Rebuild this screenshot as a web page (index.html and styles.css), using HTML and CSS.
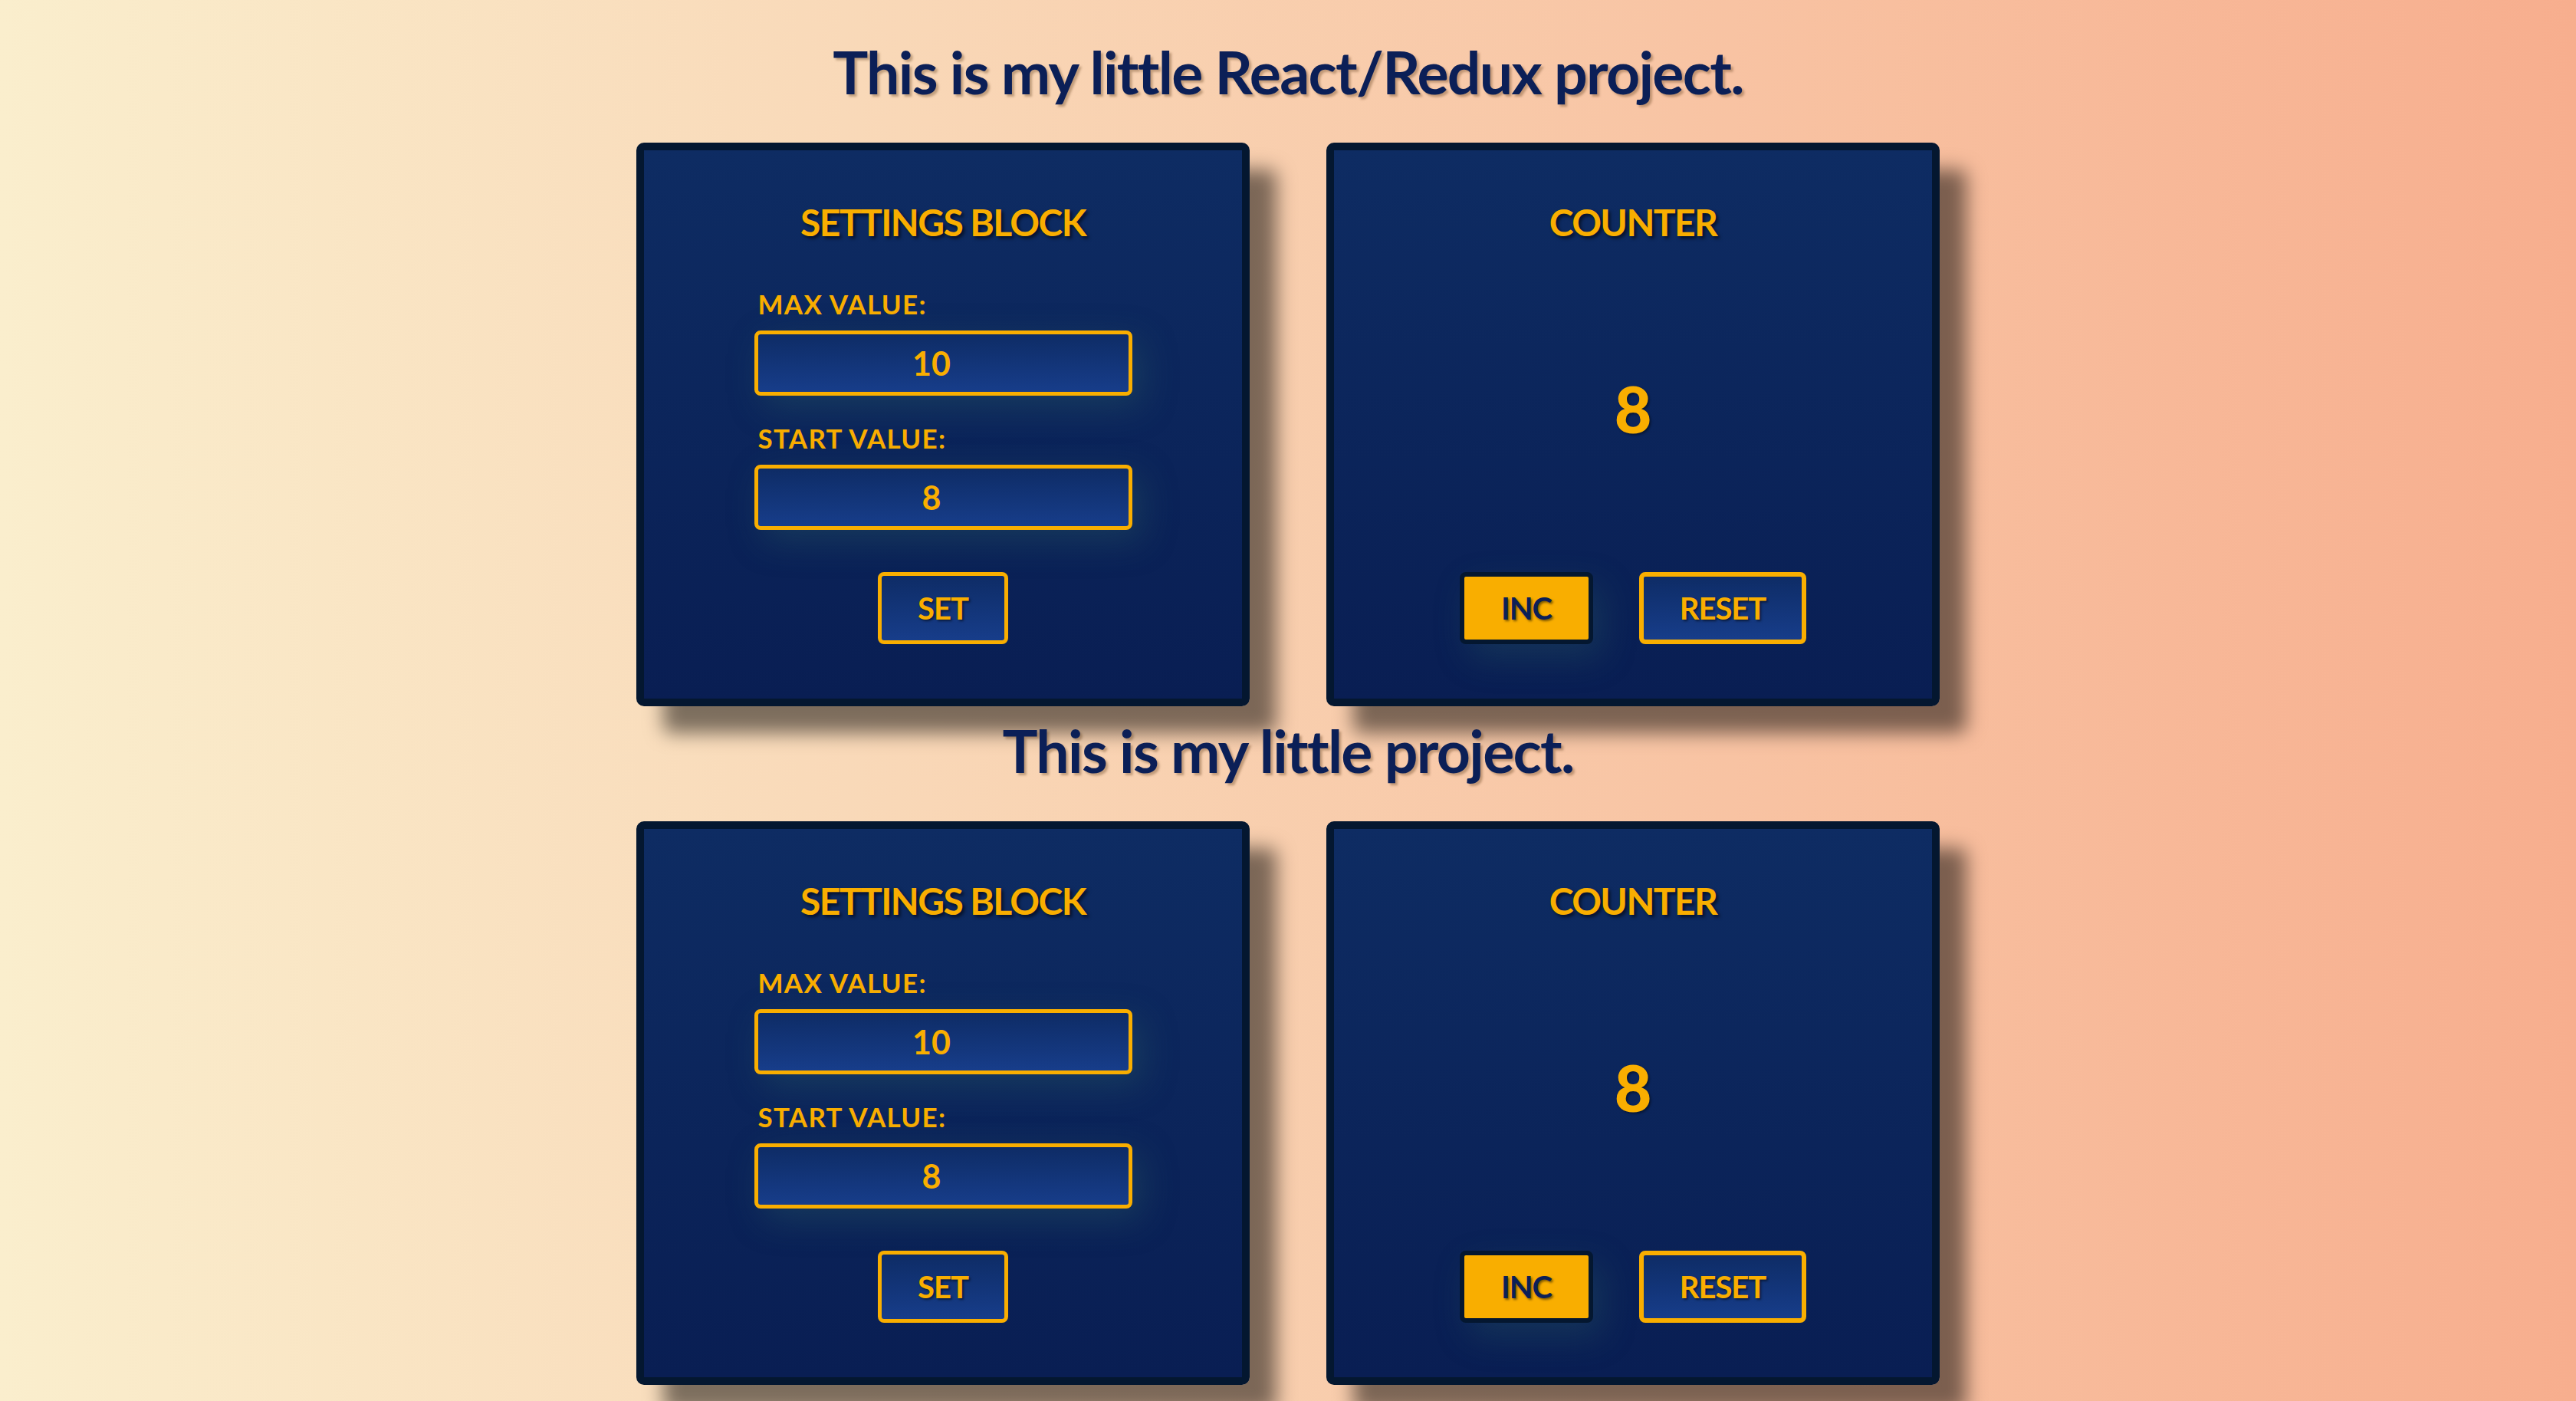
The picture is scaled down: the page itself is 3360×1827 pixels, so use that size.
FILE: index.html
```html
<!DOCTYPE html>
<html lang="en">
<head>
<meta charset="utf-8">
<title>Counter</title>
<link rel="stylesheet" href="styles.css">
</head>
<body>
<div class="page">
  <section class="app">
    <h1 class="app-title">This is my little React/Redux project.</h1>
    <div class="row">
      <div class="card">
        <h2 class="card-title">SETTINGS BLOCK</h2>
        <div class="fields">
          <label class="field"><span class="label">MAX VALUE:</span><input class="value-input" type="text" value="10"></label>
          <label class="field"><span class="label">START VALUE:</span><input class="value-input" type="text" value="8"></label>
        </div>
        <div class="actions"><button class="btn btn-set">SET</button></div>
      </div>
      <div class="card">
        <h2 class="card-title">COUNTER</h2>
        <div class="display">8</div>
        <div class="actions"><button class="btn btn-inc">INC</button><button class="btn btn-reset">RESET</button></div>
      </div>
    </div>
  </section>
  <section class="app">
    <h1 class="app-title">This is my little project.</h1>
    <div class="row">
      <div class="card">
        <h2 class="card-title">SETTINGS BLOCK</h2>
        <div class="fields">
          <label class="field"><span class="label">MAX VALUE:</span><input class="value-input" type="text" value="10"></label>
          <label class="field"><span class="label">START VALUE:</span><input class="value-input" type="text" value="8"></label>
        </div>
        <div class="actions"><button class="btn btn-set">SET</button></div>
      </div>
      <div class="card">
        <h2 class="card-title">COUNTER</h2>
        <div class="display">8</div>
        <div class="actions"><button class="btn btn-inc">INC</button><button class="btn btn-reset">RESET</button></div>
      </div>
    </div>
  </section>
</div>
</body>
</html>
```

FILE: styles.css
```css
html, body {
  margin: 0;
  padding: 0;
}
body {
  min-height: 100vh;
  background: linear-gradient(90deg, #faeecd 0%, #f7ae8e 100%);
  font-family: Lato, "Open Sans", "DejaVu Sans", sans-serif;
  overflow: hidden;
}
.page {
  padding-top: 47px;
}
.app + .app {
  margin-top: 11px;
}
.app-title {
  margin: 0 0 47px;
  text-align: center;
  font-size: 77px;
  line-height: 92px;
  font-weight: 700;
  color: #0b1f57;
  letter-spacing: -1.7px;
  text-shadow: 3px 3px 3px rgba(90, 55, 20, 0.35);
}
.row {
  display: flex;
  justify-content: center;
  gap: 100px;
}
.card {
  width: 800px;
  height: 735px;
  box-sizing: border-box;
  border: 10px solid #041730;
  border-radius: 10px;
  background: linear-gradient(180deg, #0e2c63 0%, #091e53 100%);
  box-shadow: 35px 35px 25px rgba(0, 0, 0, 0.5);
  display: flex;
  flex-direction: column;
  align-items: center;
  padding: 65px 0 71px;
}
.card-title {
  margin: 0;
  font-size: 48px;
  line-height: 58px;
  font-weight: 700;
  color: #f9ae00;
  letter-spacing: -1.6px;
  text-shadow: 3px 3px 4px rgba(0, 0, 0, 0.6);
}
.fields {
  display: flex;
  flex-direction: column;
  gap: 34px;
  margin-top: 56px;
  width: 493px;
}
.field {
  display: flex;
  flex-direction: column;
  gap: 14px;
}
.label {
  font-size: 35px;
  line-height: 42px;
  font-weight: 700;
  color: #f9ae00;
  padding-left: 5px;
  letter-spacing: 1.3px;
}
.value-input {
  box-sizing: border-box;
  width: 493px;
  height: 85px;
  border: 5px solid #f9ae00;
  border-radius: 8px;
  background: linear-gradient(180deg, #0e2c66 0%, #173d8a 100%);
  color: #f9ae00;
  font-family: Lato, "Open Sans", sans-serif;
  font-size: 43px;
  font-weight: 700;
  text-align: center;
  padding: 0 30px 0 0;
  outline: none;
  box-shadow: 12px 14px 45px rgba(45, 100, 100, 0.35);
}
.actions {
  margin-top: auto;
  display: flex;
  gap: 60px;
}
.btn {
  box-sizing: border-box;
  height: 94px;
  border-radius: 8px;
  font-family: Lato, "Open Sans", sans-serif;
  font-size: 40px;
  font-weight: 700;
  line-height: 1;
  letter-spacing: -1px;
  padding: 0;
  text-shadow: 2px 2px 3px rgba(0, 0, 0, 0.5);
  cursor: pointer;
}
.btn-set {
  width: 170px;
  border: 5px solid #f9ae00;
  background: linear-gradient(180deg, #0e2c66 0%, #173d8a 100%);
  color: #f9ae00;
}
.btn-inc {
  width: 174px;
  border: 6px solid #041730;
  background: #f9ae00;
  color: #0b1f57;
  box-shadow: 12px 18px 45px rgba(45, 100, 100, 0.3);
}
.btn-reset {
  width: 218px;
  border: 6px solid #f9ae00;
  background: linear-gradient(180deg, #0e2c66 0%, #173d8a 100%);
  color: #f9ae00;
}
.display {
  flex: 1;
  display: flex;
  align-items: center;
  font-size: 84px;
  font-weight: 900;
  color: #f9ae00;
  text-shadow: 2px 2px 3px rgba(0, 0, 0, 0.4);
}
```
